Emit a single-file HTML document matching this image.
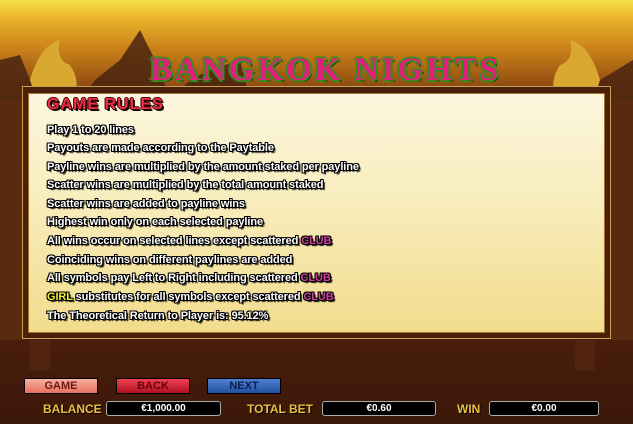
<!DOCTYPE html>
<html><head><meta charset="utf-8"><style>
*{margin:0;padding:0;box-sizing:border-box}
body{width:633px;height:424px;overflow:hidden;position:relative;font-family:"Liberation Sans Narrow","Liberation Sans",sans-serif;
background:linear-gradient(#f8e04a 0px,#e8b028 20px,#c8801a 50px,#9a5412 80px,#6a3010 110px,#4a200c 200px,#4a1e0c 330px,#3c180a 424px)}
.sil{position:absolute;left:0;top:0}
.panel{position:absolute;left:22px;top:86px;width:589px;height:253px;background:#4a200a;border:1px solid #c8a050;padding:3px}
.inner{position:absolute;left:5px;top:6px;right:5px;bottom:5px;background:linear-gradient(#fcf6de,#f8eec0 40%,#f2dc8c);border:1px solid #a07030}
.t{position:absolute;left:18px;font-weight:bold;font-size:11px;color:#fff;white-space:nowrap;letter-spacing:-0.1px;
text-shadow:-1px 0 #000,1px 0 #000,0 -1px #000,0 1px #000,1px 1px #000,-1px -1px #000,1px -1px #000,-1px 1px #000,2px 2px 1px #000}
.p{color:#d040a0}.y{color:#f0f030}
.title{position:absolute;left:150px;top:52px;font-family:"Liberation Serif",serif;font-weight:bold;font-size:33px;color:#e0207a;letter-spacing:3px;
text-shadow:-2px 0 #3a8a20,2px 0 #3a8a20,0 -2px #3a8a20,0 2px #3a8a20,2px 2px #1a4a10}
.gr{position:absolute;left:18px;top:2px;font-weight:bold;font-size:16px;color:#e8304a;letter-spacing:1px;text-shadow:-1px 0 #400,1px 0 #400,0 -1px #400,0 1px #400,2px 2px #000}
.btn{position:absolute;top:378px;height:16px;width:74px;font:bold 11px "Liberation Sans",sans-serif;text-align:center;line-height:15px;border:1px solid #000}
.lab{position:absolute;top:402px;font-weight:bold;font-size:12px;color:#e8c040;text-shadow:1px 1px #000}
.box{position:absolute;top:401px;height:15px;background:#000;border:1px solid #aaa;border-radius:3px;color:#fff;font:bold 10px "Liberation Sans",sans-serif;text-align:center;line-height:13px}
</style></head><body>
<svg class="sil" width="633" height="424">
<g fill="#4a2410" opacity="0.85">
<polygon points="0,60 20,55 30,80 40,100 60,100 80,100 95,80 120,60 140,30 160,70 170,100 190,80 210,70 240,60 250,100 280,90 300,100 560,100 570,70 600,80 633,60 633,100 0,100"/>
</g>
<rect x="0" y="100" width="22" height="240" fill="#5a2a10"/>
<rect x="611" y="100" width="22" height="240" fill="#5a2a10"/>
<g fill="#d8a830"><path d="M30,80 Q40,45 60,40 Q55,60 70,65 Q80,80 75,95 L35,95 Z"/><path d="M600,80 Q590,45 570,40 Q575,60 560,65 Q550,80 555,95 L595,95 Z"/></g>
<g fill="#5a2a14" opacity="0.6"><rect x="30" y="340" width="20" height="30"/><rect x="575" y="340" width="20" height="30"/></g>
</svg>
<div class="title">BANGKOK NIGHTS</div>
<div class="panel"><div class="inner">
<div class="gr">GAME RULES</div>
<div class="t" style="top:30px">Play 1 to 20 lines</div>
<div class="t" style="top:48px">Payouts are made according to the Paytable</div>
<div class="t" style="top:67px">Payline wins are multiplied by the amount staked per payline</div>
<div class="t" style="top:85px">Scatter wins are multiplied by the total amount staked</div>
<div class="t" style="top:104px">Scatter wins are added to payline wins</div>
<div class="t" style="top:122px">Highest win only on each selected payline</div>
<div class="t" style="top:141px">All wins occur on selected lines except scattered <span class="p">CLUB</span></div>
<div class="t" style="top:160px">Coinciding wins on different paylines are added</div>
<div class="t" style="top:178px">All symbols pay Left to Right including scattered <span class="p">CLUB</span></div>
<div class="t" style="top:197px"><span class="y">GIRL</span> substitutes for all symbols except scattered <span class="p">CLUB</span></div>
<div class="t" style="top:216px">The Theoretical Return to Player is: 95.12%</div>
</div></div>
<div class="btn" style="left:24px;background:linear-gradient(#f8b0a0,#e87060);color:#6a1a10">GAME</div>
<div class="btn" style="left:116px;background:linear-gradient(#f04050,#b01020);color:#6a0010">BACK</div>
<div class="btn" style="left:207px;background:linear-gradient(#5080d0,#2050a0);color:#0a2050">NEXT</div>
<div class="lab" style="left:43px">BALANCE</div>
<div class="box" style="left:106px;width:115px">€1,000.00</div>
<div class="lab" style="left:247px">TOTAL BET</div>
<div class="box" style="left:322px;width:114px">€0.60</div>
<div class="lab" style="left:457px">WIN</div>
<div class="box" style="left:489px;width:110px">€0.00</div>
</body></html>
